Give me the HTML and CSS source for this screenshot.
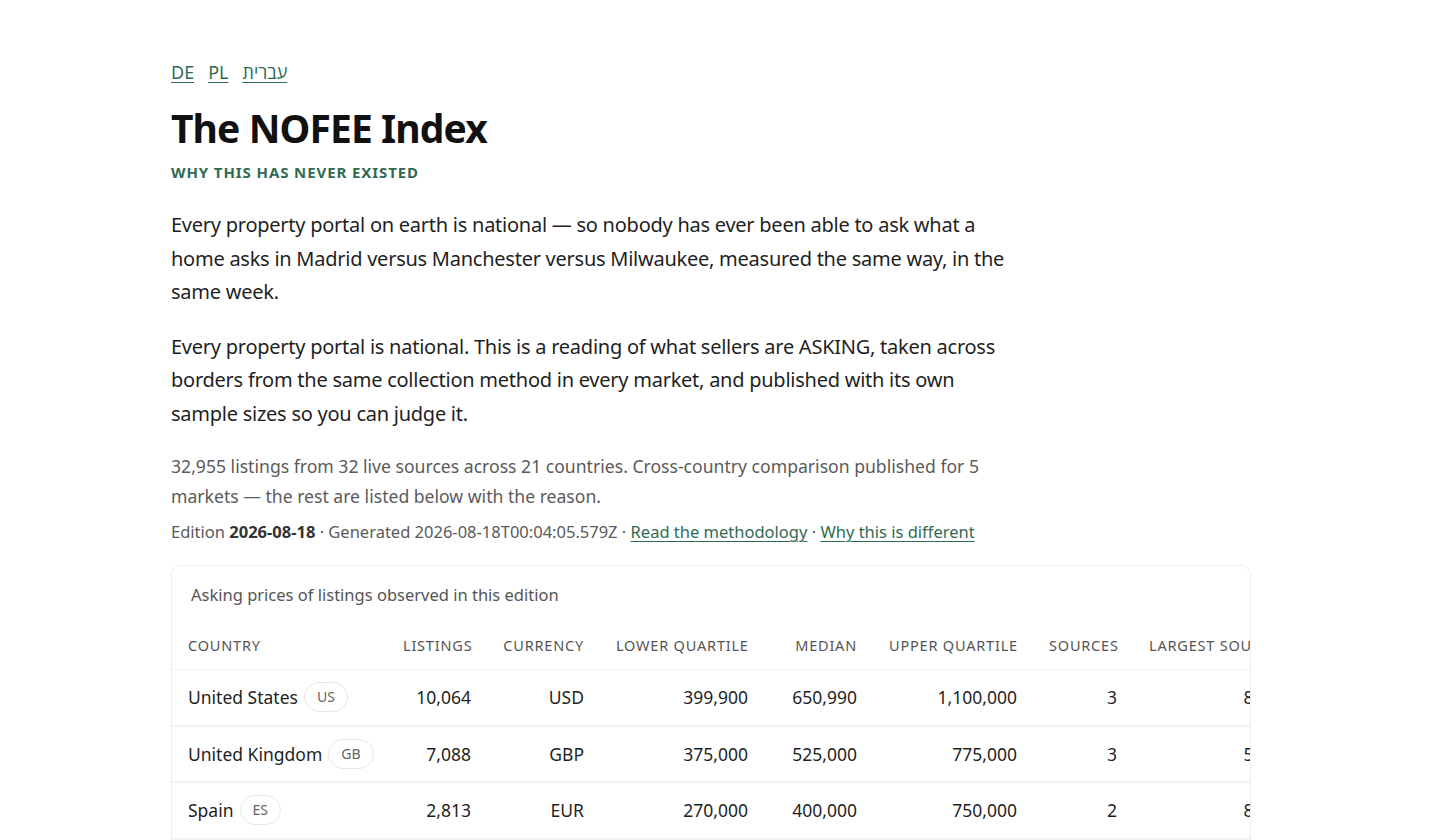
FILE: index.html
```html
<!DOCTYPE html>
<html lang="en">
<head>
<meta charset="utf-8">
<title>The NOFEE Index</title>
<link rel="stylesheet" href="styles.css">
</head>
<body>
<main class="page">
  <nav class="langs">
    <a href="#">DE</a>
    <a href="#">PL</a>
    <a href="#" dir="rtl" lang="he">עברית</a>
  </nav>
  <h1 class="title">The NOFEE Index</h1>
  <p class="eyebrow">Why this has never existed</p>
  <p class="lead">Every property portal on earth is national — so nobody has ever been able to ask what a home asks in Madrid versus Manchester versus Milwaukee, measured the same way, in the same week.</p>
  <p class="lead">Every property portal is national. This is a reading of what sellers are ASKING, taken across borders from the same collection method in every market, and published with its own sample sizes so you can judge it.</p>
  <p class="summary">32,955 listings from 32 live sources across 21 countries. Cross-country comparison published for 5 markets — the rest are listed below with the reason.</p>
  <p class="meta">Edition <strong>2026-08-18</strong> · Generated 2026-08-18T00:04:05.579Z · <a href="#">Read the methodology</a> · <a href="#">Why this is different</a></p>

  <section class="card">
    <p class="caption">Asking prices of listings observed in this edition</p>
    <div class="scroller">
      <table class="prices">
        <colgroup>
          <col class="c-country"><col class="c-listings"><col class="c-currency"><col class="c-lower"><col class="c-median"><col class="c-upper"><col class="c-sources"><col class="c-largest"><col class="c-share">
        </colgroup>
        <thead>
          <tr>
            <th class="left">Country</th>
            <th>Listings</th>
            <th>Currency</th>
            <th>Lower quartile</th>
            <th>Median</th>
            <th>Upper quartile</th>
            <th>Sources</th>
            <th>Largest source</th>
            <th>Share</th>
          </tr>
        </thead>
        <tbody>
          <tr>
            <td class="left"><span class="name">United States</span><span class="code">US</span></td>
            <td>10,064</td><td>USD</td><td>399,900</td><td>650,990</td><td>1,100,000</td><td>3</td><td>82%</td><td>0.82</td>
          </tr>
          <tr>
            <td class="left"><span class="name">United Kingdom</span><span class="code">GB</span></td>
            <td>7,088</td><td>GBP</td><td>375,000</td><td>525,000</td><td>775,000</td><td>3</td><td>54%</td><td>0.54</td>
          </tr>
          <tr>
            <td class="left"><span class="name">Spain</span><span class="code">ES</span></td>
            <td>2,813</td><td>EUR</td><td>270,000</td><td>400,000</td><td>750,000</td><td>2</td><td>86%</td><td>0.86</td>
          </tr>
          <tr>
            <td class="left"><span class="name">Portugal</span><span class="code">PT</span></td>
            <td>1,944</td><td>EUR</td><td>215,000</td><td>340,000</td><td>590,000</td><td>2</td><td>71%</td><td>0.71</td>
          </tr>
          <tr>
            <td class="left"><span class="name">Poland</span><span class="code">PL</span></td>
            <td>1,512</td><td>PLN</td><td>489,000</td><td>699,000</td><td>1,050,000</td><td>2</td><td>63%</td><td>0.63</td>
          </tr>
        </tbody>
      </table>
    </div>
  </section>

  <section class="more">
    <h2>Markets not compared this edition</h2>
    <p>Each market below has live sources, but not enough listings or not enough independent sources to publish a comparable figure.</p>
  </section>
</main>
</body>
</html>
```

FILE: styles.css
```css
html, body {
  margin: 0;
  padding: 0;
  background: #ffffff;
}

body {
  font-family: "Segoe UI", "Noto Sans", "Open Sans", "Liberation Sans", sans-serif;
  color: #1a1a1a;
  padding-right: 16px;
}

.page {
  max-width: 1080px;
  margin: 0 auto;
  padding: 58px 0 80px;
}

.langs {
  display: flex;
  gap: 14px;
  font-size: 18px;
  line-height: 28px;
}

.langs a,
.meta a {
  color: #2f6b53;
  text-decoration: underline;
  text-underline-offset: 3px;
  text-decoration-thickness: 1px;
}

.title {
  margin: 16px 0 0;
  font-size: 39px;
  line-height: 52px;
  font-weight: 700;
  letter-spacing: -0.9px;
  color: #111;
}

.eyebrow {
  margin: 7px 0 0;
  font-size: 15px;
  line-height: 22px;
  font-weight: 700;
  text-transform: uppercase;
  letter-spacing: 0.9px;
  color: #2f6b53;
}

.lead {
  max-width: 840px;
  margin: 25px 0 0;
  font-size: 20px;
  line-height: 33.5px;
  letter-spacing: -0.25px;
  color: #1f1f1f;
}

.lead + .lead {
  margin-top: 21px;
}

.summary {
  max-width: 840px;
  margin: 21px 0 0;
  font-size: 17.6px;
  line-height: 30px;
  color: #5a5a5a;
}

.meta {
  margin: 8px 0 0;
  font-size: 16.5px;
  line-height: 26px;
  color: #5a5a5a;
}

.meta strong {
  color: #333;
  font-weight: 700;
}

.card {
  margin-top: 20px;
  border: 1px solid #ededed;
  border-radius: 10px;
  overflow: hidden;
}

.caption {
  margin: 0;
  padding: 17px 19px 0;
  font-size: 16.5px;
  line-height: 24px;
  color: #555;
}

.scroller {
  overflow-x: auto;
  margin-top: 13px;
}

.prices {
  border-collapse: collapse;
  table-layout: fixed;
  width: 1350px;
}

.c-country { width: 215px; }
.c-listings { width: 100px; }
.c-currency { width: 113px; }
.c-lower { width: 164px; }
.c-median { width: 109px; }
.c-upper { width: 160px; }
.c-sources { width: 100px; }
.c-largest { width: 161px; }
.c-share { width: 228px; }

.prices th,
.prices td {
  padding: 0 16px;
  text-align: right;
  white-space: nowrap;
}

.prices th {
  height: 49px;
  font-size: 14.5px;
  font-weight: 400;
  text-transform: uppercase;
  letter-spacing: 0.8px;
  color: #555;
  border-bottom: 1px solid #f0f0f0;
}

.prices td {
  height: 54.5px;
  font-size: 17.5px;
  color: #1f1f1f;
  border-bottom: 2px solid #f3f3f3;
}

.prices .left {
  text-align: left;
}

.name {
  vertical-align: middle;
}

.code {
  display: inline-block;
  vertical-align: middle;
  margin-left: 6px;
  padding: 0 12px;
  height: 28px;
  line-height: 28px;
  border: 1px solid #e8e8e8;
  border-radius: 999px;
  font-size: 14px;
  color: #666;
}

.more {
  margin-top: 48px;
}

.more h2 {
  margin: 0;
  font-size: 24px;
}

.more p {
  max-width: 840px;
  font-size: 17px;
  line-height: 30px;
  color: #5a5a5a;
}
```
